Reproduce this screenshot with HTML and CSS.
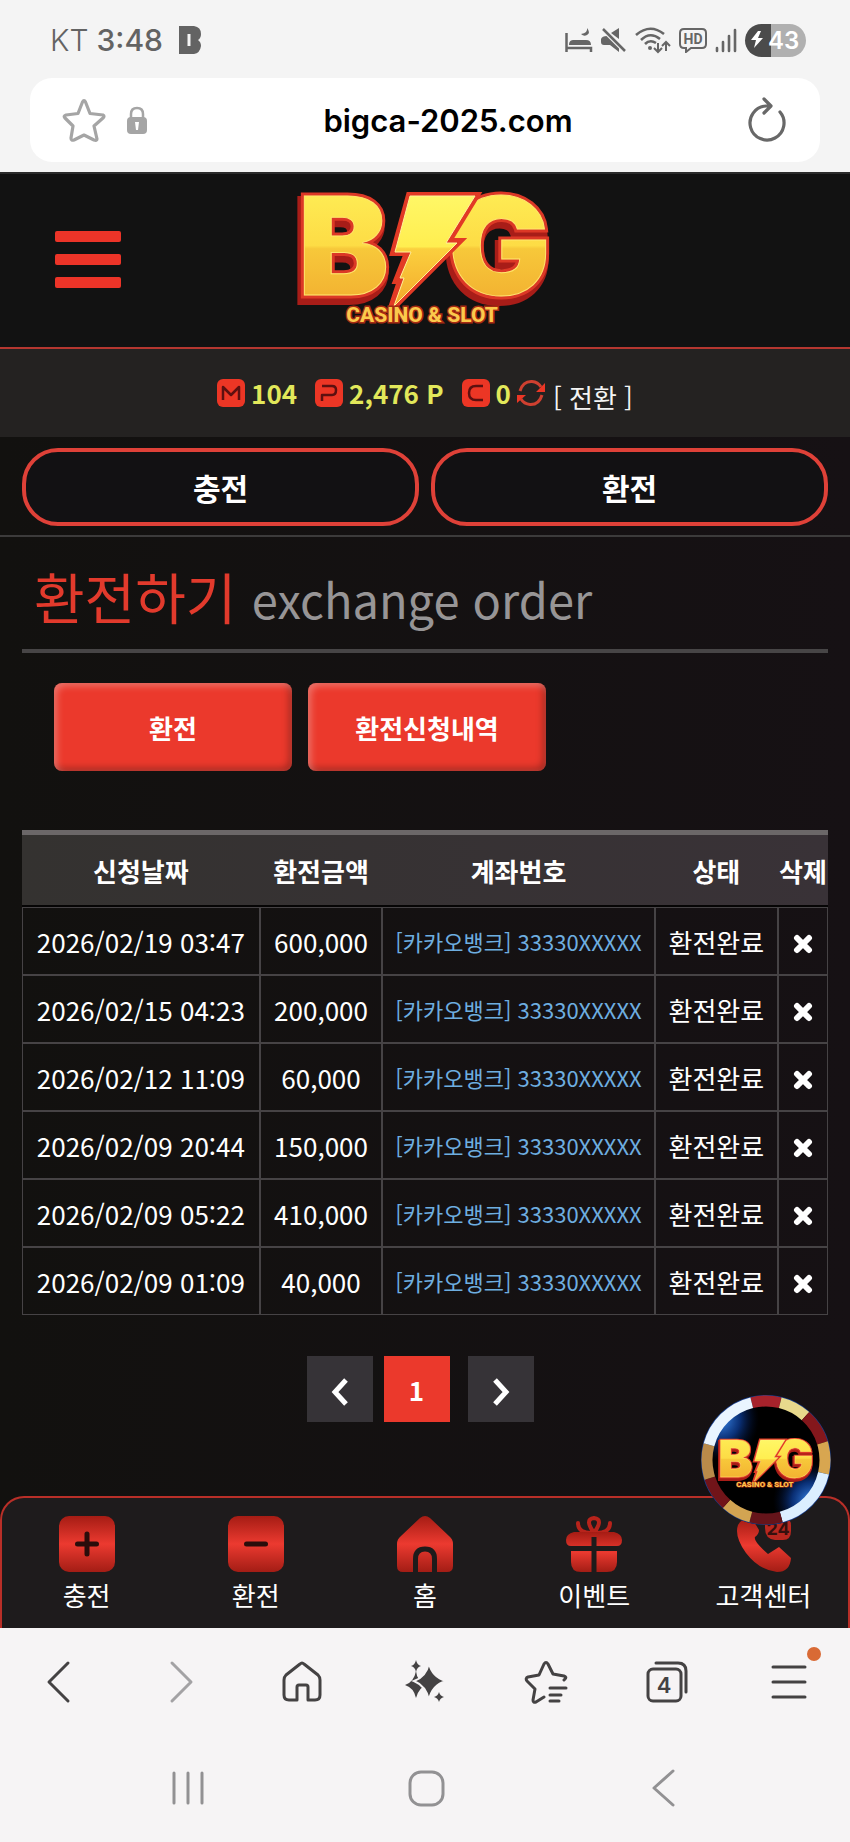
FILE: index.html
```
<!DOCTYPE html>
<html lang="ko">
<head>
<meta charset="utf-8">
<meta name="viewport" content="width=device-width, initial-scale=1">
<title>BIG CASINO &amp; SLOT</title>
<link rel="stylesheet" href="styles.css">
</head>
<body>
<svg class="defs" width="0" height="0" aria-hidden="true">
  <defs>
    <linearGradient id="gold" x1="0" y1="0" x2="0" y2="1">
      <stop offset="0" stop-color="#fff45c"/><stop offset=".5" stop-color="#fddc45"/><stop offset=".52" stop-color="#f7c83a"/><stop offset="1" stop-color="#f0a52c"/>
    </linearGradient>
    <linearGradient id="boltgold" x1="0" y1="0" x2="0" y2="1">
      <stop offset="0" stop-color="#fff766"/><stop offset=".46" stop-color="#ffee50"/><stop offset=".48" stop-color="#fbd03e"/><stop offset="1" stop-color="#f3a92c"/>
    </linearGradient>
    <linearGradient id="redfade" x1="0" y1="0" x2="0" y2="1">
      <stop offset="0" stop-color="#a51c14"/><stop offset=".5" stop-color="#ec3a30"/><stop offset="1" stop-color="#a31d15"/>
    </linearGradient>
    <radialGradient id="glow"><stop offset="0" stop-color="#3d8cf0"/><stop offset=".5" stop-color="#0d3f9c" stop-opacity=".75"/><stop offset="1" stop-color="#02103a" stop-opacity="0"/></radialGradient>
    <clipPath id="disc"><circle cx="65" cy="65" r="65"/></clipPath>
    <symbol id="biglogo" viewBox="0 0 260 138">
      <g class="logo-letters logo-shadow"><text x="1" y="109">B</text><text x="151" y="109">G</text></g>
      <g class="logo-letters logo-edge"><text x="3" y="104">B</text><text x="153" y="104">G</text></g>
      <g class="logo-letters logo-shine"><text x="3" y="104">B</text><text x="153" y="104">G</text></g>
      <path d="M114 4H182L154 50H165L95 120 105 90H101L112 62H98Z" fill="#b51f19" stroke="#e23a25" stroke-width="6"/>
      <path d="M115 5H180L151 52H162L99 115 109 87H105L116 61H100Z" fill="url(#boltgold)" stroke="#fff39a" stroke-width="1"/>
      <text class="logo-sub" x="127" y="131">CASINO &amp; SLOT</text>
    </symbol>
    <symbol id="cross" viewBox="0 0 20 20"><path d="M4 4 16 16M16 4 4 16" stroke="#fff" stroke-width="6" stroke-linecap="round"/></symbol>
  </defs>
</svg>

<header class="browser-top">
  <div class="status">
    <div class="status-left">
      <span class="carrier">KT</span><span class="clock">3:48</span>
      <svg width="22" height="28" viewBox="0 0 22 28"><path d="M0 0H15Q22 1 22 8Q22 12 19 14Q22 16 22 20Q21 27 15 28H0Z" fill="#636363"/><path d="M10 8V20" stroke="#f4f4f4" stroke-width="3"/></svg>
    </div>
    <div class="status-right">
      <svg width="28" height="26" viewBox="0 0 28 26"><path d="M1.500 6V25M1.500 21H26V25" fill="none" stroke="#666" stroke-width="2.500"/><path d="M4 18C4 14 6 13 9 13H21Q26 13 26 18Z" fill="#666"/><path d="M22 1Q23 6 16 7Q19 10 22 8Q26 6 22 1Z" fill="#666"/></svg>
      <svg width="26" height="26" viewBox="0 0 26 26"><path d="M0 12Q1 9 6 9L10 7 18 17V25L9 18H3Q0 18 0 15ZM10 6 18 1V12Z" fill="#666"/><path d="M2 2 24 24" stroke="#f4f4f4" stroke-width="5"/><path d="M2 2 24 24" stroke="#666" stroke-width="2.500"/></svg>
      <svg width="36" height="28" viewBox="0 0 36 28" fill="none" stroke="#666" stroke-width="2.600"><path d="M1 9Q15-3 29 8M6 14Q15 5 25 13M10 18Q15 13 21 17"/><circle cx="15" cy="22" r="2" fill="#666" stroke="none"/><path d="M23 17V26M19 22 23 26 27 22M31 25V16M27 20 31 16 35 20" stroke-width="2"/></svg>
      <svg width="28" height="26" viewBox="0 0 28 26"><path d="M5 2H23Q27 2 27 6V17Q27 21 23 21H12L7 25V21H5Q1 21 1 17V6Q1 2 5 2Z" fill="none" stroke="#666" stroke-width="2"/><text class="hd" x="14" y="17">HD</text></svg>
      <svg width="22" height="26" viewBox="0 0 22 26" stroke="#666" stroke-width="2.600" stroke-linecap="round"><path d="M2 21V24M8 15V24M14 9V24M20 3V24"/></svg>
      <div class="battery"><svg width="14" height="18" viewBox="0 0 14 18"><path d="M8 0 1 9H6L4 17 13 7H8L11 0Z" fill="#fff"/></svg><span>43</span></div>
    </div>
  </div>
  <div class="address">
    <button class="plain" aria-label="북마크"><svg width="44" height="44" viewBox="0 0 44 44"><path d="M23.500 4 28 15.500 41 17Q43 18 41 20L32 28 35 41Q35 43 32 42L22 37 12 42Q9 43 9 40L11 28 3 20Q1 18 4 17L16 15.500 20.500 4Q22 1 23.500 4Z" fill="none" stroke="#a5a5a5" stroke-width="3.200" stroke-linejoin="round"/></svg></button>
    <svg width="22" height="28" viewBox="0 0 22 28"><path d="M5 12V8Q5 2 11 2T17 8V12" fill="none" stroke="#a5a5a5" stroke-width="2.500"/><rect x="1" y="11" width="20" height="17" rx="4" fill="#a5a5a5"/><path d="M9 16H13L12 24H10Z" fill="#fff"/></svg>
    <input class="url" type="text" value="bigca-2025.com" aria-label="주소">
    <button class="plain reload" aria-label="새로고침"><svg width="44" height="46" viewBox="0 0 44 46" fill="none" stroke="#686868" stroke-width="3.200" stroke-linecap="round" stroke-linejoin="round"><path d="M36 15A17 17 0 1 1 22 9H26M20 2 27 9 20 16"/></svg></button>
  </div>
</header>

<main class="site">
  <div class="site-head">
    <button class="plain burger" aria-label="메뉴"><span></span><span></span><span></span></button>
    <a class="brand" href="#" aria-label="BIG CASINO &amp; SLOT"><svg width="260" height="138"><use href="#biglogo"/></svg></a>
  </div>

  <div class="wallet">
    <span class="coin"><svg width="28" height="28" viewBox="0 0 28 28"><rect width="28" height="28" rx="6" fill="#ec3625"/><path d="M6 21V8L14 16 22 8V21" class="mark"/></svg><b>104</b></span>
    <span class="coin"><svg width="28" height="28" viewBox="0 0 28 28"><rect width="28" height="28" rx="6" fill="#ec3625"/><path d="M7 22V16H17Q21 16 21 11Q21 7 17 7H7" class="mark"/></svg><b>2,476 P</b></span>
    <span class="coin"><svg width="28" height="28" viewBox="0 0 28 28"><rect width="28" height="28" rx="6" fill="#ec3625"/><path d="M21 7H14Q7 7 7 14Q7 21 14 21H21" class="mark"/></svg><b>0</b>
      <svg width="28" height="28" viewBox="0 0 28 28"><path d="M3 12Q6 2 15 2.500Q21 3 24 8M25 16Q22 26 13 25.500Q7 25 4 20" fill="none" stroke="#cf4030" stroke-width="3"/><path d="M28 4V13H19ZM0 24V16H9Z" fill="#ec3625"/></svg>
      <a class="convert" href="#">[ 전환 ]</a></span>
  </div>

  <nav class="money" aria-label="입출금">
    <a href="#">충전</a>
    <a href="#">환전</a>
  </nav>

  <section class="order">
    <h1 class="title">환전하기 <small>exchange order</small></h1>
    <div class="tabs">
      <button class="tab">환전</button>
      <button class="tab">환전신청내역</button>
    </div>
    <table class="history">
      <colgroup><col class="c-date"><col class="c-amount"><col class="c-account"><col class="c-state"><col class="c-del"></colgroup>
      <thead><tr><th>신청날짜</th><th>환전금액</th><th>계좌번호</th><th>상태</th><th>삭제</th></tr></thead>
      <tbody>
        <tr><td>2026/02/19 03:47</td><td>600,000</td><td class="account">[카카오뱅크] 33330XXXXX</td><td>환전완료</td><td><button class="plain del" aria-label="삭제"><svg width="20" height="20"><use href="#cross"/></svg></button></td></tr>
        <tr><td>2026/02/15 04:23</td><td>200,000</td><td class="account">[카카오뱅크] 33330XXXXX</td><td>환전완료</td><td><button class="plain del" aria-label="삭제"><svg width="20" height="20"><use href="#cross"/></svg></button></td></tr>
        <tr><td>2026/02/12 11:09</td><td>60,000</td><td class="account">[카카오뱅크] 33330XXXXX</td><td>환전완료</td><td><button class="plain del" aria-label="삭제"><svg width="20" height="20"><use href="#cross"/></svg></button></td></tr>
        <tr><td>2026/02/09 20:44</td><td>150,000</td><td class="account">[카카오뱅크] 33330XXXXX</td><td>환전완료</td><td><button class="plain del" aria-label="삭제"><svg width="20" height="20"><use href="#cross"/></svg></button></td></tr>
        <tr><td>2026/02/09 05:22</td><td>410,000</td><td class="account">[카카오뱅크] 33330XXXXX</td><td>환전완료</td><td><button class="plain del" aria-label="삭제"><svg width="20" height="20"><use href="#cross"/></svg></button></td></tr>
        <tr><td>2026/02/09 01:09</td><td>40,000</td><td class="account">[카카오뱅크] 33330XXXXX</td><td>환전완료</td><td><button class="plain del" aria-label="삭제"><svg width="20" height="20"><use href="#cross"/></svg></button></td></tr>
      </tbody>
    </table>
    <nav class="pages" aria-label="페이지">
      <a href="#" aria-label="이전"><svg width="20" height="28" viewBox="0 0 20 28"><path d="M16 2 5 14 16 26" class="chev"/></svg></a>
      <a href="#" class="current">1</a>
      <a href="#" class="next" aria-label="다음"><svg width="20" height="28" viewBox="0 0 20 28"><path d="M4 2 15 14 4 26" class="chev"/></svg></a>
    </nav>
  </section>

  <div class="dock-wrap">
    <nav class="dock" aria-label="바로가기">
      <a href="#"><svg width="56" height="56" viewBox="0 0 56 56"><rect width="56" height="56" rx="10" fill="url(#redfade)"/><path d="M28 18V38M18.500 28H37.500" stroke="#2a0d0b" stroke-width="5" stroke-linecap="round"/></svg>충전</a>
      <a href="#"><svg width="56" height="56" viewBox="0 0 56 56"><rect width="56" height="56" rx="10" fill="url(#redfade)"/><path d="M18.500 28H37.500" stroke="#2a0d0b" stroke-width="5" stroke-linecap="round"/></svg>환전</a>
      <a href="#"><svg width="56" height="56" viewBox="0 0 56 56"><path d="M23 2Q28-2 33 2L52 20Q56 23 56 28V50Q56 56 50 56H6Q0 56 0 50V28Q0 23 4 20Z" fill="url(#redfade)"/><path d="M18.500 56V43Q18.500 33 28 33T37.500 43V56" fill="none" stroke="#1e1b1b" stroke-width="5"/></svg>홈</a>
      <a href="#"><svg width="56" height="56" viewBox="0 0 56 56"><g fill="none" stroke="#b8231b" stroke-width="4" stroke-linecap="round"><path d="M28 17Q18 3 28 2Q38 3 28 17Q12 18 12 7M28 17Q44 18 44 7"/></g><path d="M8 16H48Q56 18 56 24Q56 30 51 30H5Q0 30 0 24Q0 18 8 16ZM5 35H51V46Q51 56 41 56H15Q5 56 5 46Z" fill="url(#redfade)"/><path d="M28 21V56M5 32.500H51" stroke="#1e1b1b" stroke-width="5"/></svg>이벤트</a>
      <a href="#"><svg width="56" height="56" viewBox="0 0 56 56"><path d="M3 9Q8 0 18 4L24 14Q24 18 20 21Q18 25 33 38L44 31L56 42Q55 56 42 56Q24 54 11 37Q-1 20 3 9Z" fill="url(#redfade)"/><path d="M30 2H50Q56 2 56 10V15Q56 24 48 24H40Q30 23 30 12Z" fill="#b8271f"/><text x="43" y="19" class="hours">24</text></svg>고객센터</a>
    </nav>
    <a class="chip" href="#" aria-label="BIG">
      <svg width="130" height="130" viewBox="0 0 130 130">
        <circle cx="65" cy="65" r="65" fill="#000"/>
        <g clip-path="url(#disc)"><ellipse cx="20" cy="24" rx="38" ry="42" fill="url(#glow)"/><ellipse cx="110" cy="106" rx="38" ry="38" fill="url(#glow)"/></g>
        <circle cx="65" cy="65" r="64" fill="none" stroke="#1c3f8c" stroke-width="2"/>
        <g class="ring" transform="rotate(-104 65 65)">
          <circle cx="65" cy="65" r="59" pathLength="360" stroke="#a6222b" stroke-dasharray="28 332"/>
          <circle cx="65" cy="65" r="59" pathLength="360" stroke="#e8d98c" stroke-dasharray="28 332" stroke-dashoffset="-28"/>
          <circle cx="65" cy="65" r="59" pathLength="360" stroke="#84171c" stroke-dasharray="31 329" stroke-dashoffset="-56"/>
          <circle cx="65" cy="65" r="59" pathLength="360" stroke="#d8a650" stroke-dasharray="30 330" stroke-dashoffset="-87"/>
          <circle cx="65" cy="65" r="59" pathLength="360" stroke="#dcefff" stroke-dasharray="62 298" stroke-dashoffset="-117"/>
          <circle cx="65" cy="65" r="59" pathLength="360" stroke="#65141a" stroke-dasharray="30 330" stroke-dashoffset="-179"/>
          <circle cx="65" cy="65" r="59" pathLength="360" stroke="#d2a452" stroke-dasharray="27 333" stroke-dashoffset="-209"/>
          <circle cx="65" cy="65" r="59" pathLength="360" stroke="#711419" stroke-dasharray="30 330" stroke-dashoffset="-236"/>
          <circle cx="65" cy="65" r="59" pathLength="360" stroke="#b98a4a" stroke-dasharray="33 327" stroke-dashoffset="-266"/>
          <circle cx="65" cy="65" r="59" pathLength="360" stroke="#eaf5ff" stroke-dasharray="61 299" stroke-dashoffset="-299"/>
        </g>
        <use href="#biglogo" x="16" y="43" width="98" height="52"/>
      </svg>
    </a>
  </div>
</main>

<footer class="browser-bottom">
  <div class="tools">
    <button class="plain" aria-label="뒤로"><svg width="44" height="44" viewBox="0 0 44 44" class="line"><path d="M31 3 12 22 31 41"/></svg></button>
    <button class="plain" aria-label="앞으로"><svg width="44" height="44" viewBox="0 0 44 44" class="line faint"><path d="M13 3 32 22 13 41"/></svg></button>
    <button class="plain" aria-label="홈"><svg width="44" height="44" viewBox="0 0 44 44" class="line"><path d="M20 4Q22 2 24 4L38 15Q40 17 40 20V35Q40 40 35 40H28V27Q28 25 26 25H19Q17 25 17 27V40H9Q4 40 4 35V20Q4 17 6 15Z"/></svg></button>
    <button class="plain" aria-label="AI"><svg width="44" height="44" viewBox="0 0 44 44" fill="#444243"><path d="M14 11Q15 22 25 25Q17 27 14 38Q12 28 3 25Q12 22 14 11Z"/><path d="M27 3Q30 17 44 21Q30 25 27 40Q24 26 12 21Q24 17 27 3Z" stroke="#f6f4f5" stroke-width="2"/><path d="M14 0Q15 5 19 6Q15 7 14 12Q13 7 9 6Q13 5 14 0ZM37 32Q38 36 42 37Q38 38 37 42Q36 38 32 37Q36 36 37 32Z"/></svg></button>
    <button class="plain" aria-label="북마크 목록"><svg width="44" height="44" viewBox="0 0 44 44" class="line"><path d="M20 37 12 42Q9 43 9 40L11 29 3 21Q1 18 4 17L15 15 20 4Q22 1 24 4L29 14 40 16Q43 17 41 19L40 20M26 28H42M26 35H37M26 41H35"/></svg></button>
    <button class="plain" aria-label="탭 4개"><svg width="44" height="44" viewBox="0 0 44 44" class="line"><rect x="3" y="9" width="33" height="32" rx="5"/><path d="M11 3H33Q41 3 41 11V32"/><text x="19" y="33" class="count">4</text></svg></button>
    <button class="plain more" aria-label="더보기"><svg width="44" height="44" viewBox="0 0 44 44" class="line"><path d="M6 7H38M6 22H38M6 37H38"/></svg><span class="dot"></span></button>
  </div>
  <div class="system">
    <button class="plain" aria-label="최근 앱"><svg width="40" height="40" viewBox="0 0 40 40" class="line grey"><path d="M6 5V35M20 5V35M34 5V35"/></svg></button>
    <button class="plain" aria-label="홈 화면"><svg width="40" height="40" viewBox="0 0 40 40" class="line grey"><rect x="4" y="4" width="33" height="33" rx="11"/></svg></button>
    <button class="plain" aria-label="뒤로 가기"><svg width="40" height="40" viewBox="0 0 40 40" class="line grey"><path d="M29 3 10 20 29 37"/></svg></button>
  </div>
</footer>
</body>
</html>
```

FILE: styles.css
```
* { box-sizing: border-box; }
body {
  margin: 0;
  min-height: 100vh;
  display: flex;
  flex-direction: column;
  background: #f6f4f5;
  color: #fff;
  font-family: "Noto Sans CJK KR", sans-serif;
  font-size: 26px;
}
a { color: inherit; text-decoration: none; }
svg { display: block; flex: none; }
.defs { position: absolute; }
.plain { border: 0; padding: 0; background: none; display: flex; }

/* phone status and address bar */
.browser-top { background: #f4f4f4; color: #636363; font-family: Inter, sans-serif; padding-bottom: 10px; }
.status { display: flex; justify-content: space-between; height: 78px; padding: 2px 44px 0 50px; }
.status-left, .status-right { display: flex; align-items: center; }
.status-left { font-size: 30px; }
.carrier { font-weight: 300; margin-right: 8px; }
.clock { font-weight: 500; margin-right: 16px; }
.status-right { gap: 8px; }
.hd { font: 700 14px Roboto, sans-serif; fill: #666; text-anchor: middle; }
.battery {
  display: flex; align-items: center; gap: 4px;
  width: 61px; height: 33px; padding-left: 5px;
  border-radius: 17px; color: #fff; font-size: 24px; font-weight: 600;
  background: linear-gradient(90deg, #4b4b4b 43%, #b0b0b0 43%);
}
.address {
  display: flex; align-items: center; gap: 20px;
  height: 84px; margin: 0 30px; padding: 0 32px;
  background: #fff; border-radius: 22px;
}
.url {
  flex: 1; min-width: 0; border: 0; padding: 0 0 0 4px; background: none; color: #000;
  font: 600 31px Inter, sans-serif; text-align: center;
}

/* site header */
.site { background: linear-gradient(90deg, #12110f, #161114); }
.site-head {
  display: grid; grid-template-columns: 1fr auto 1fr; align-items: center;
  height: 177px; padding: 0 55px; background: #121212;
  border-top: 2px solid #2b2b2b; border-bottom: 2px solid #b53730;
}
.burger { flex-direction: column; gap: 12px; width: 66px; padding-bottom: 2px; }
.burger span { height: 11px; border-radius: 2px; background: #ec3428; }
.brand { padding-bottom: 2px; }
.logo-letters { font: 900 136px Inter, sans-serif; }
.logo-shadow { fill: #9e1c18; stroke: #a81d18; stroke-width: 10px; }
.logo-edge { fill: #d93023; stroke: #dc3826; stroke-width: 7px; }
.logo-shine { fill: url(#gold); stroke: #ffe66c; stroke-width: 1px; }
.logo-sub { font: 800 21px Roboto, sans-serif; fill: #fbc94c; stroke: #a52a12; stroke-width: 3px; paint-order: stroke; text-anchor: middle; }

.wallet {
  display: flex; align-items: center; justify-content: center; gap: 18px;
  height: 88px; background: #242221;
}
.coin { display: flex; align-items: center; gap: 6px; }
.coin b { color: #e2e85a; line-height: 32px; }
.mark { fill: none; stroke: #5c1010; stroke-width: 2.5px; stroke-linejoin: round; }
.convert { color: #f4f4f4; padding: 6px 0 0 2px; }

.money {
  display: grid; grid-template-columns: 1fr 1fr; gap: 12px;
  padding: 11px 22px 9px; border-bottom: 2px solid #3c3b3b;
}
.money a {
  height: 78px; border: 4px solid #df4138; border-radius: 36px;
  display: flex; align-items: center; justify-content: center;
  font-size: 30px; font-weight: 700; background: #121113;
}

.order { padding: 0 22px 74px; }
.title {
  margin: 0; padding: 20px 12px 12px; border-bottom: 4px solid #474546;
  color: #e23a2c; font-size: 55px; font-weight: 400; line-height: 76px; white-space: nowrap;
}
.title small { color: #979596; font-size: 47px; }
.tabs { display: flex; gap: 16px; padding: 30px 32px 59px; }
.tab {
  width: 238px; height: 88px; border: 0; border-radius: 8px;
  background: #eb392c; color: #fff; font: inherit; font-weight: 700;
  box-shadow: inset 3px 3px 7px rgba(255, 255, 255, .3), inset -3px -3px 7px rgba(0, 0, 0, .3);
}

.history { width: 100%; table-layout: fixed; border-collapse: separate; border-spacing: 0; text-align: center; white-space: nowrap; }
.c-date { width: 29.5%; }
.c-amount { width: 15.2%; }
.c-account { width: 33.8%; }
.c-state { width: 15.3%; }
.c-del { width: 6.2%; }
.history thead { background: linear-gradient(90deg, #343230, #393237); }
.history th { height: 77px; padding: 0; border-top: 5px solid #6b6768; border-bottom: 2px solid #060505; font-weight: 700; }
.history td { height: 68px; padding: 0; border: 1px solid #464345; }
.history .account { color: #6eaee0; font-size: 22px; }
.del { margin: 5px auto 0; }

.pages { display: flex; justify-content: center; gap: 11px; padding-top: 41px; margin-right: 10px; }
.pages a { width: 66px; height: 66px; display: flex; align-items: center; justify-content: center; background: #363337; font-weight: 700; }
.pages .current { background: #eb392c; }
.pages .next { margin-left: 7px; }
.pages svg { margin-top: 5px; }
.chev { fill: none; stroke: #fff; stroke-width: 5px; }

/* bottom shortcuts */
.dock-wrap { position: relative; }
.dock {
  display: grid; grid-template-columns: repeat(5, 1fr);
  height: 132px; padding-top: 18px; background: #1e1b1c;
  border: 2px solid #b92f28; border-bottom: 0; border-radius: 24px 24px 0 0;
}
.dock a { display: flex; flex-direction: column; align-items: center; gap: 4px; line-height: 38px; }
.hours { font: 700 18px Inter, sans-serif; fill: #35100e; text-anchor: middle; }
.chip { position: absolute; right: 19px; top: -101px; }
.ring { fill: none; stroke-width: 11px; }

/* browser and system bars */
.browser-bottom { background: #f6f4f5; }
.tools { display: flex; justify-content: space-between; padding: 32px 39px 0 37px; }
.line { fill: none; stroke: #444243; stroke-width: 3px; stroke-linecap: round; stroke-linejoin: round; }
.faint { stroke: #a3a2a4; }
.grey { stroke: #929193; }
.count { font: 600 22px Inter, sans-serif; fill: #444243; stroke: none; text-anchor: middle; }
.more { position: relative; }
.dot { position: absolute; right: -10px; top: -13px; width: 14px; height: 14px; border-radius: 50%; background: #d96a35; }
.system { display: flex; justify-content: space-between; padding: 64px 166px 32px 168px; }
```
